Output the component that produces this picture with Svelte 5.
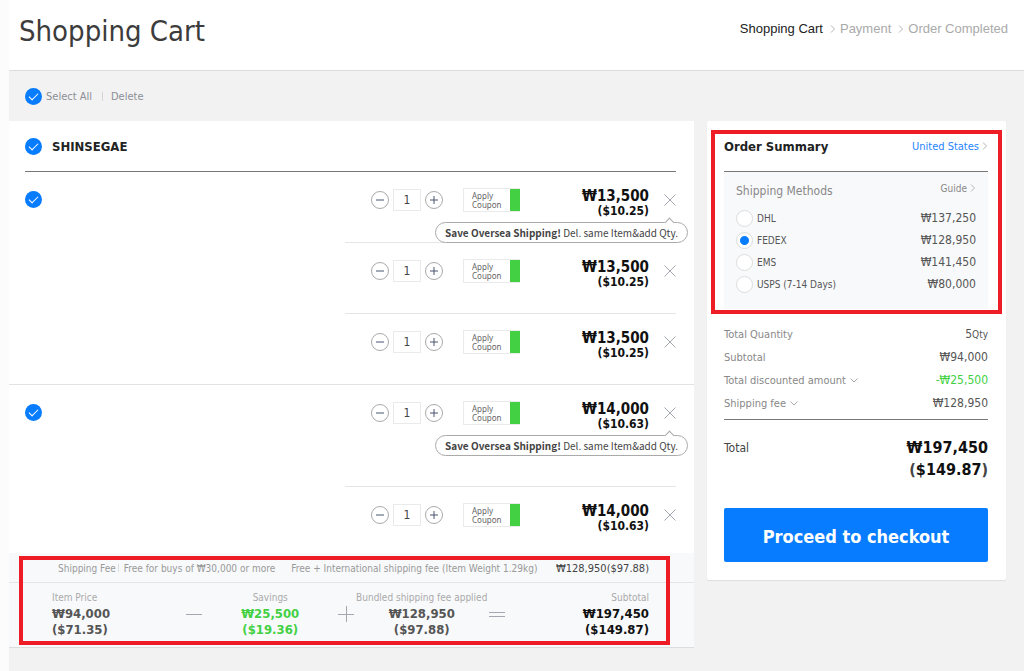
<script>
  let groups = $state([
    {
      id: 'a',
      checked: true,
      items: [
        { qty: 1, price: '₩13,500', usd: '($10.25)', tip: true },
        { qty: 1, price: '₩13,500', usd: '($10.25)' },
        { qty: 1, price: '₩13,500', usd: '($10.25)' }
      ]
    },
    {
      id: 'b',
      checked: true,
      items: [
        { qty: 1, price: '₩14,000', usd: '($10.63)', tip: true },
        { qty: 1, price: '₩14,000', usd: '($10.63)' }
      ]
    }
  ]);

  const methods = [
    { name: 'DHL', price: '₩137,250' },
    { name: 'FEDEX', price: '₩128,950' },
    { name: 'EMS', price: '₩141,450' },
    { name: 'USPS (7-14 Days)', price: '₩80,000' }
  ];

  let method = $state('FEDEX');
</script>

{#snippet chevron()}
  <svg class="chevron" viewBox="0 0 6 10" aria-hidden="true"><path d="M1 1.5 4.5 5 1 8.5" /></svg>
{/snippet}

<div class="page">
  <header class="app-header">
    <h1>Shopping Cart</h1>
    <ol class="steps">
      <li class="current">Shopping Cart</li>
      <li>{@render chevron()}Payment</li>
      <li>{@render chevron()}Order Completed</li>
    </ol>
  </header>

  <div class="toolbar">
    <label class="select-all"><input type="checkbox" class="check" checked /> Select All</label>
    <button type="button" class="delete">Delete</button>
  </div>

  <div class="columns">
    <main class="cart">
      <div class="shop">
        <input type="checkbox" class="check" id="shop" checked />
        <label for="shop">SHINSEGAE</label>
      </div>

      {#each groups as group}
        <section class="group {group.id}">
          <input type="checkbox" class="check" aria-label="Select item" bind:checked={group.checked} />
          <div class="items">
            {#each group.items as item}
              <div class="item">
                <div class="stepper">
                  <button type="button" class="round" aria-label="Decrease" onclick={() => item.qty > 1 && item.qty--}>
                    <svg viewBox="0 0 18 18"><path d="M5 9h8" /></svg>
                  </button>
                  <input type="text" aria-label="Quantity" bind:value={item.qty} />
                  <button type="button" class="round" aria-label="Increase" onclick={() => item.qty++}>
                    <svg viewBox="0 0 18 18"><path d="M5 9h8M9 5v8" /></svg>
                  </button>
                </div>
                <button type="button" class="coupon">Apply<br />Coupon</button>
                <div class="price">
                  <strong>{item.price}</strong>
                  <span>{item.usd}</span>
                </div>
                <button type="button" class="remove" aria-label="Remove">
                  <svg viewBox="0 0 12 12"><path d="M.5.5l11 11M11.5.5l-11 11" /></svg>
                </button>
                {#if item.tip}
                  <div class="tip"><b>Save Oversea Shipping!</b> Del. same Item&amp;add Qty.</div>
                {/if}
              </div>
            {/each}
          </div>
        </section>
      {/each}

      <section class="totals">
        <div class="fee">
          <span class="fee-label">Shipping Fee</span>
          <span class="fee-free">Free for buys of ₩30,000 or more</span>
          <span>Free + International shipping fee (Item Weight 1.29kg)</span>
          <span class="fee-price">₩128,950($97.88)</span>
        </div>
        <div class="sum">
          <div class="cell first">
            <span>Item Price</span>
            <strong>₩94,000<br />($71.35)</strong>
          </div>
          <svg class="op" viewBox="0 0 18 18"><path d="M1 9.5h16" /></svg>
          <div class="cell savings">
            <span>Savings</span>
            <strong>₩25,500<br />($19.36)</strong>
          </div>
          <svg class="op" viewBox="0 0 18 18"><path d="M1 9.5h16M9.5 1v16" /></svg>
          <div class="cell">
            <span>Bundled shipping fee applied</span>
            <strong>₩128,950<br />($97.88)</strong>
          </div>
          <svg class="op" viewBox="0 0 18 18"><path d="M1 7.5h16M1 11.5h16" /></svg>
          <div class="cell last">
            <span>Subtotal</span>
            <strong>₩197,450<br />($149.87)</strong>
          </div>
        </div>
        <div class="marker"></div>
      </section>
    </main>

    <aside class="summary">
      <div class="summary-head">
        <h2>Order Summary</h2>
        <a href="#country">United States{@render chevron()}</a>
      </div>

      <div class="methods">
        <div class="methods-head">
          <h3>Shipping Methods</h3>
          <a href="#guide">Guide{@render chevron()}</a>
        </div>
        {#each methods as m}
          <label class="method">
            <input type="radio" name="method" value={m.name} bind:group={method} />
            <span>{m.name}</span>
            <span class="amount">{m.price}</span>
          </label>
        {/each}
      </div>

      <dl>
        <div><dt>Total Quantity</dt><dd>5<small>Qty</small></dd></div>
        <div><dt>Subtotal</dt><dd>₩94,000</dd></div>
        <div>
          <dt>Total discounted amount <svg class="down" viewBox="0 0 8 5"><path d="M.5.5 4 4 7.5.5" /></svg></dt>
          <dd class="green">-₩25,500</dd>
        </div>
        <div>
          <dt>Shipping fee <svg class="down" viewBox="0 0 8 5"><path d="M.5.5 4 4 7.5.5" /></svg></dt>
          <dd>₩128,950</dd>
        </div>
      </dl>

      <div class="total">
        <span>Total</span>
        <strong>₩197,450<br /><i>(</i>$149.87<i>)</i></strong>
      </div>

      <button type="button" class="checkout">Proceed to checkout</button>
      <div class="marker"></div>
    </aside>
  </div>
</div>

<style>
  :global(body) {
    background: #fcfcfc;
  }
  .page {
    margin-left: 9px;
    min-height: 100vh;
    background: #f2f2f2;
    color: #555;
    font-family: Tahoma, "DejaVu Sans Condensed", "Noto Sans", sans-serif;
    font-size: 11px;
  }
  .page * {
    box-sizing: border-box;
  }
  button {
    padding: 0;
    border: 0;
    background: none;
    color: inherit;
    font: inherit;
    cursor: pointer;
  }
  a {
    text-decoration: none;
  }
  svg {
    display: block;
    fill: none;
    stroke: currentColor;
  }
  .chevron {
    width: 6px;
    height: 10px;
    color: #b5b5b5;
  }

  .app-header {
    display: flex;
    justify-content: space-between;
    height: 71px;
    padding: 0 16px 0 10px;
    border-bottom: 1px solid #ddd;
    background: #fff;
  }
  h1 {
    margin: 0;
    color: #3c3c3c;
    font-size: 29px;
    font-weight: 400;
    line-height: 62px;
  }
  .steps {
    display: flex;
    margin: 0;
    padding: 0;
    list-style: none;
    color: #aaa;
    font-family: "Liberation Sans", Arial, sans-serif;
    font-size: 13px;
    line-height: 58px;
  }
  .steps li {
    display: flex;
    align-items: center;
    height: 58px;
  }
  .steps .current {
    color: #222;
  }
  .steps .chevron {
    margin: 0 4px 0 7px;
  }

  .toolbar {
    display: flex;
    align-items: center;
    height: 50px;
    padding-left: 16px;
    color: #8c8f96;
  }
  .select-all {
    display: flex;
    align-items: center;
    gap: 4px;
  }
  .delete {
    margin-left: 10px;
    padding-left: 9px;
    background: linear-gradient(#d5d5d5, #d5d5d5) left center / 1px 9px no-repeat;
  }
  .check {
    position: relative;
    flex: none;
    width: 17px;
    height: 17px;
    margin: 0;
    appearance: none;
    border: 1px solid #ccc;
    border-radius: 50%;
    background: #fff;
  }
  .check:checked {
    border: 0;
    background: #087cff;
  }
  .check:checked::after {
    content: "";
    position: absolute;
    top: 5px;
    left: 4px;
    width: 8px;
    height: 4px;
    border: solid #fff;
    border-width: 0 0 1px 1px;
    transform: rotate(-45deg);
  }

  .columns {
    display: grid;
    grid-template-columns: 1fr 299px;
    gap: 13px;
    align-items: start;
    padding: 0 18px 23px 0;
  }
  .cart {
    background: #fff;
  }
  .shop {
    display: flex;
    align-items: center;
    gap: 10px;
    height: 51px;
    margin: 0 18px 0 16px;
    border-bottom: 1px solid #777;
    color: #222;
    font-size: 13px;
    font-weight: 700;
  }
  .group {
    display: flex;
    justify-content: space-between;
    padding: 0 18px 0 16px;
  }
  .group.a {
    border-bottom: 1px solid #e2e2e2;
  }
  .group > .check {
    margin-top: 19px;
  }
  .items {
    width: 331px;
  }
  .item {
    position: relative;
    display: flex;
    align-items: flex-start;
    height: 71px;
    padding: 16px 0 0 26px;
    border-bottom: 1px solid #e5e5e5;
  }
  .item:last-child {
    height: 70px;
    border-bottom: 0;
  }
  .group.b .item {
    height: 102px;
  }
  .group.b .item:last-child {
    height: 66px;
  }
  .stepper {
    display: flex;
    align-items: center;
    gap: 4px;
    height: 24px;
  }
  .round {
    width: 18px;
    height: 18px;
    border: 1px solid #aaa;
    border-radius: 50%;
    color: #4b5570;
  }
  .round svg {
    width: 18px;
    height: 18px;
    margin: -1px;
  }
  .stepper input {
    width: 28px;
    height: 22px;
    padding: 0;
    border: 1px solid #eaeaea;
    color: #444;
    font: inherit;
    font-size: 12px;
    text-align: center;
  }
  .coupon {
    width: 57px;
    height: 24px;
    margin-left: 20px;
    padding-left: 8px;
    border: 1px solid #eaeaea;
    border-right: 0;
    border-radius: 1px;
    background: linear-gradient(#43d143, #43d143) right / 10px 100% no-repeat border-box;
    color: #666;
    font-family: "Noto Sans", sans-serif;
    font-size: 8px;
    line-height: 9px;
    text-align: left;
  }
  .price {
    flex: 1;
    color: #111;
    text-align: right;
  }
  .price strong,
  .price span {
    display: block;
    font-size: 15px;
    font-weight: 700;
    line-height: 16px;
  }
  .price span {
    font-size: 12px;
    line-height: 14px;
  }
  .remove {
    margin: 6px 0 0 15px;
    color: #a5a8b0;
  }
  .remove svg {
    width: 12px;
    height: 12px;
  }
  .tip {
    position: absolute;
    top: 50px;
    right: -12px;
    z-index: 1;
    padding: 0 9px;
    border: 1px solid #aaa;
    border-radius: 11px;
    background: #fff;
    color: #444;
    font-family: "Noto Sans CJK KR", sans-serif;
    font-size: 10px;
    line-height: 19px;
    white-space: nowrap;
  }
  .tip::before {
    content: "";
    position: absolute;
    top: -4px;
    right: 14px;
    width: 6px;
    height: 6px;
    border: solid #aaa;
    border-width: 1px 0 0 1px;
    background: #fff;
    transform: rotate(45deg);
  }

  .totals {
    position: relative;
    border-bottom: 1px solid #ddd;
    background: #f8f9fb;
    white-space: nowrap;
  }
  .fee {
    display: flex;
    align-items: center;
    height: 30px;
    padding: 1px 45px 0 49px;
    border-bottom: 1px solid #e5e5e5;
    color: #999;
    font-size: 10px;
  }
  .fee-label {
    padding-right: 3px;
    background: linear-gradient(#ddd, #ddd) right center / 1px 8px no-repeat;
  }
  .fee-free {
    margin: 0 16px 0 5px;
  }
  .fee-price {
    margin-left: auto;
    color: #444;
    font-size: 11px;
  }
  .sum {
    display: grid;
    grid-template-columns: 133fr 18px 133fr 18px 133fr 18px 142fr;
    padding: 7px 45px 9px 43px;
  }
  .cell {
    min-width: 0;
    text-align: center;
  }
  .cell.first {
    text-align: left;
  }
  .cell.last {
    text-align: right;
  }
  .cell span {
    display: block;
    color: #aaa;
    font-size: 10px;
    line-height: 16px;
  }
  .cell strong {
    display: block;
    color: #555;
    font-size: 13px;
    line-height: 16px;
  }
  .cell.last strong {
    color: #111;
  }
  .cell.savings strong {
    color: #43d143;
  }
  .op {
    width: 18px;
    height: 18px;
    margin-top: 15px;
    color: #a5a8b0;
  }
  .marker {
    position: absolute;
    inset: 3px 24px 2px 10px;
    border: 4px solid #ee1c25;
    pointer-events: none;
  }

  .summary {
    position: relative;
    padding: 0 18px 18px 17px;
    border-radius: 2px;
    background: #fff;
    box-shadow: 0 1px 1px #ddd;
  }
  .summary .marker {
    inset: 9px 4px auto 4px;
    height: 184px;
  }
  .summary-head {
    display: flex;
    align-items: center;
    justify-content: space-between;
    height: 51px;
    border-bottom: 1px solid #777;
  }
  h2 {
    margin: 0;
    color: #222;
    font-size: 13px;
  }
  .summary-head a,
  .methods-head a {
    display: flex;
    align-items: center;
    gap: 3px;
    color: #2585ff;
  }
  .methods {
    padding: 7px 12px 14px;
    background: #f8f9fb;
  }
  .methods-head {
    display: flex;
    justify-content: space-between;
    height: 28px;
  }
  h3 {
    margin: 0;
    color: #888;
    font-size: 12px;
    font-weight: 400;
    line-height: 24px;
  }
  .methods-head a {
    height: 18px;
    color: #888;
    font-size: 10px;
  }
  .method {
    display: flex;
    align-items: center;
    gap: 4px;
    height: 22px;
    font-size: 10px;
  }
  .method input {
    width: 17px;
    height: 17px;
    margin: 0;
    appearance: none;
    border: 1px solid #ddd;
    border-radius: 50%;
    background: #fff;
  }
  .method input:checked {
    background: radial-gradient(circle, #087cff 4px, #fff 5px);
  }
  .amount {
    margin-left: auto;
    font-size: 12px;
  }
  dl {
    margin: 0;
    padding: 14px 0 4px;
    border-bottom: 1px solid #777;
  }
  dl div {
    display: flex;
    justify-content: space-between;
    line-height: 23px;
  }
  dt {
    display: flex;
    align-items: center;
    gap: 4px;
    color: #888;
  }
  dd {
    margin: 0;
    font-size: 12px;
  }
  dd small {
    font-size: 10px;
  }
  dd.green {
    color: #43d143;
  }
  .down {
    width: 8px;
    height: 5px;
    color: #aaa;
  }
  .total {
    display: flex;
    justify-content: space-between;
    padding: 17px 0 27px;
    color: #444;
    font-size: 12px;
    line-height: 22px;
  }
  .total strong {
    color: #111;
    font-size: 16px;
    text-align: right;
  }
  .total i {
    color: #444;
    font-style: normal;
  }
  .checkout {
    width: 100%;
    height: 54px;
    padding-top: 2px;
    border-radius: 2px;
    background: #087cff;
    color: #fff;
    font-size: 18px;
    font-weight: 700;
  }
</style>
